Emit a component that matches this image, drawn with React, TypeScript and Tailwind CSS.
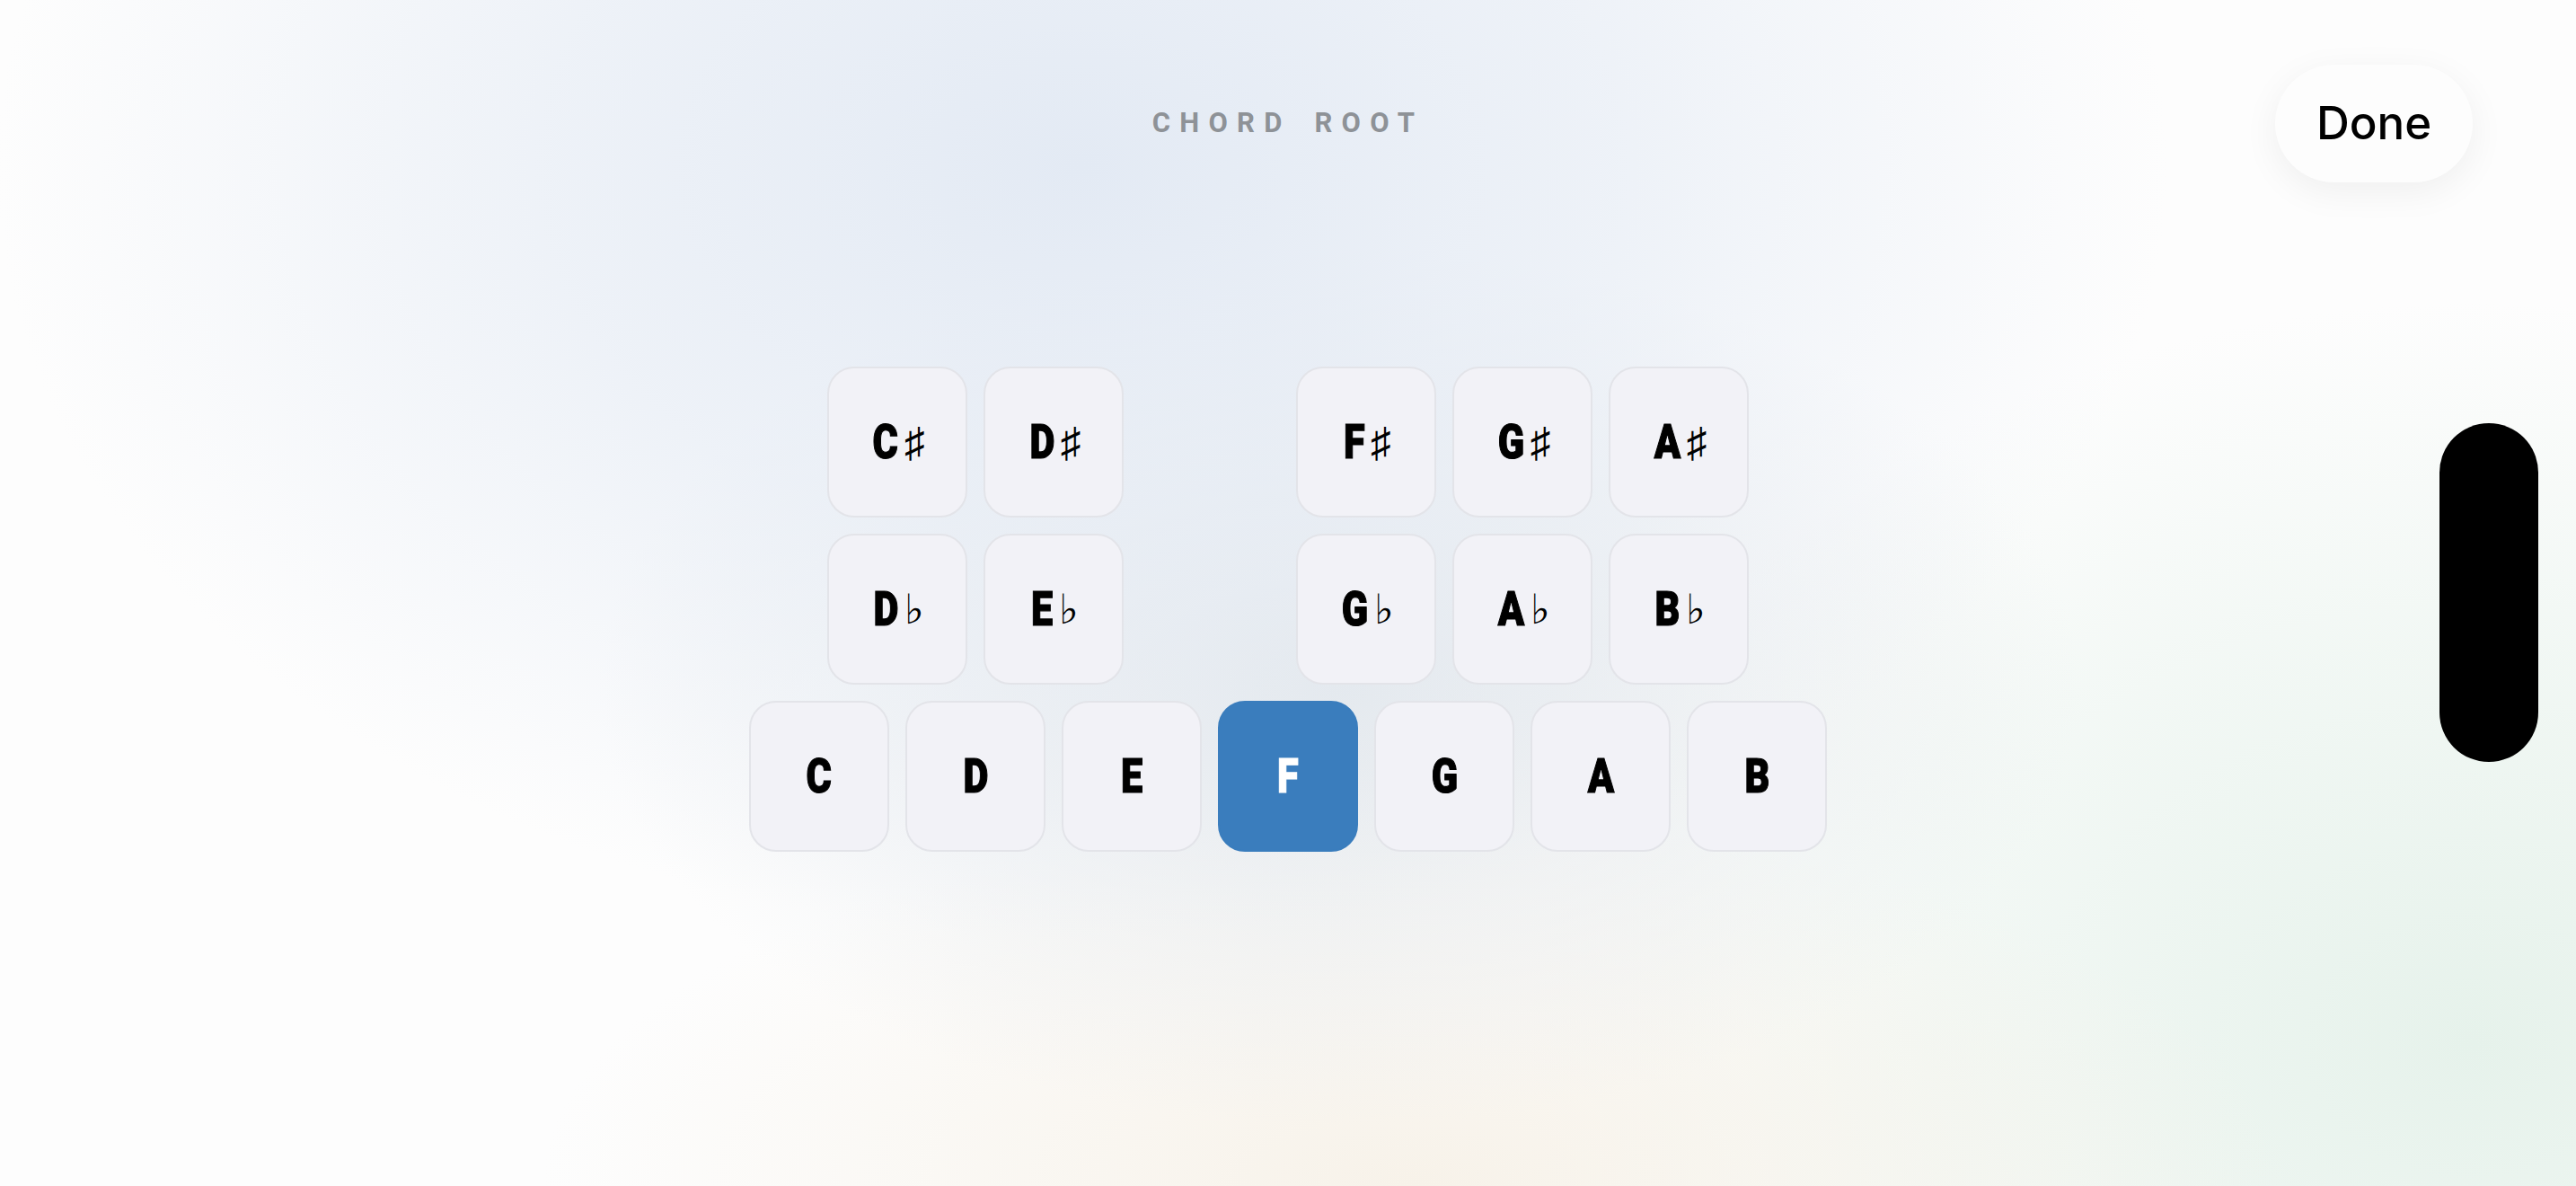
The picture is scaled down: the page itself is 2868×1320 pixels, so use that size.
import React from "react";

type Note = { name: string; acc?: string } | null;

const sharps: Note[] = [
  { name: "C", acc: "♯" },
  { name: "D", acc: "♯" },
  null,
  { name: "F", acc: "♯" },
  { name: "G", acc: "♯" },
  { name: "A", acc: "♯" },
];

const flats: Note[] = [
  { name: "D", acc: "♭" },
  { name: "E", acc: "♭" },
  null,
  { name: "G", acc: "♭" },
  { name: "A", acc: "♭" },
  { name: "B", acc: "♭" },
];

const naturals = ["C", "D", "E", "F", "G", "A", "B"];

function Key({ name, acc, selected }: { name: string; acc?: string; selected?: boolean }) {
  return (
    <button
      className={`flex h-[168px] w-[156px] items-center justify-center rounded-[30px] border-2 ${
        selected ? "border-[#3a7dbd] bg-[#3a7dbd] text-white" : "border-[#e3e4e9] bg-[#f2f2f7] text-black"
      }`}
    >
      <span className="inline-block scale-x-[0.8] font-['Roboto',sans-serif] text-[54px] leading-none font-black [-webkit-text-stroke:1.2px_currentColor]">
        {name}
      </span>
      {acc && (
        <span className="ml-[3px] font-['DejaVu_Sans',sans-serif] text-[46px] leading-none font-light">{acc}</span>
      )}
    </button>
  );
}

function Row({ notes }: { notes: Note[] }) {
  return (
    <div className="flex justify-center gap-[18px]">
      {notes.map((n, i) =>
        n ? <Key key={i} name={n.name} acc={n.acc} /> : <div key={i} className="w-[156px]" />
      )}
    </div>
  );
}

export default function App() {
  return (
    <div className="relative h-[1320px] w-full overflow-hidden bg-[#fdfdfd] bg-[radial-gradient(ellipse_1550px_1100px_at_42%_14%,#e3eaf4_0%,rgba(227,234,244,0.6)_38%,rgba(227,234,244,0)_78%),radial-gradient(ellipse_1100px_650px_at_52%_58%,#e5e9ec_0%,rgba(229,233,236,0)_75%),radial-gradient(ellipse_1300px_550px_at_55%_100%,#f7f2e9_0%,rgba(247,242,233,0)_75%),radial-gradient(ellipse_1400px_1100px_at_96%_88%,#e6f2eb_0%,rgba(230,242,235,0.5)_40%,rgba(230,242,235,0)_75%)]">
      <div className="flex flex-col">
        {/* header */}
        <div className="grid grid-cols-[1fr_auto_1fr] items-center pt-[72px]">
          <div />
          <h1 className="font-['Roboto',sans-serif] text-[31px] font-bold tracking-[0.33em] text-[#8e9297] [word-spacing:8px]">
            CHORD ROOT
          </h1>
          <div className="flex justify-end pr-[115px]">
            <button className="flex h-[131px] w-[220px] items-center justify-center rounded-full bg-[#fdfdfd] font-['Inter',sans-serif] text-[51px] font-medium text-black shadow-[0_10px_40px_rgba(0,0,0,0.06)]">
              Done
            </button>
          </div>
        </div>

        {/* keyboard */}
        <div className="mt-[205px] flex flex-col gap-[18px]">
          <Row notes={sharps} />
          <Row notes={flats} />
          <div className="flex justify-center gap-[18px]">
            {naturals.map((n) => (
              <Key key={n} name={n} selected={n === "F"} />
            ))}
          </div>
        </div>
      </div>

      {/* side handle */}
      <div className="absolute top-[471px] right-[42px] h-[377px] w-[110px] rounded-full bg-black" />
    </div>
  );
}
